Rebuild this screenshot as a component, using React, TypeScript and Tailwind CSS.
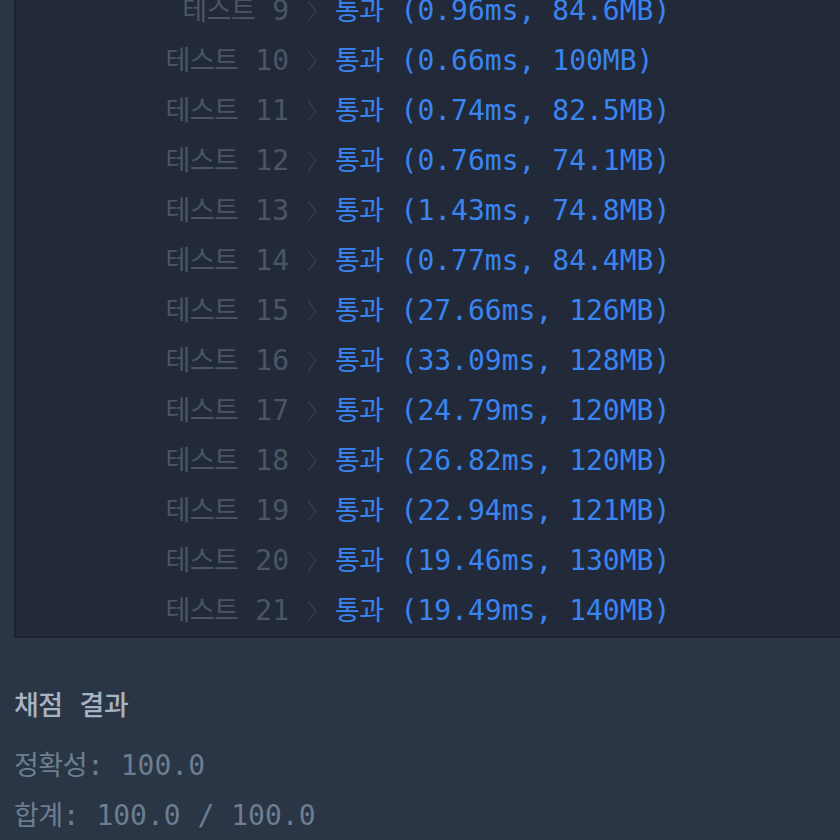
const rows: [number, string, string][] = [
  [9, "0.96ms", "84.6MB"],
  [10, "0.66ms", "100MB"],
  [11, "0.74ms", "82.5MB"],
  [12, "0.76ms", "74.1MB"],
  [13, "1.43ms", "74.8MB"],
  [14, "0.77ms", "84.4MB"],
  [15, "27.66ms", "126MB"],
  [16, "33.09ms", "128MB"],
  [17, "24.79ms", "120MB"],
  [18, "26.82ms", "120MB"],
  [19, "22.94ms", "121MB"],
  [20, "19.46ms", "130MB"],
  [21, "19.49ms", "140MB"],
];

const mono = {
  fontFamily: '"DejaVu Sans Mono", "Noto Sans CJK KR", monospace',
};

// hangul runs a bit narrower than the CJK font's full em
function Ko({ children }: { children: string }) {
  return <span className="text-[27px] tracking-[-0.5px]">{children}</span>;
}

function Chevron() {
  return (
    <svg width="12" height="24" viewBox="0 0 12 24" fill="none">
      <path d="M2 2 L10 12 L2 22" stroke="#323c4d" strokeWidth="1.5" />
    </svg>
  );
}

export default function App() {
  return (
    <div
      className="h-[840px] w-[840px] overflow-hidden bg-[#2a3546] text-[28px] leading-[50px]"
      style={mono}
    >
      <div className="-mt-[14px] ml-[14px] border-b-2 border-l-2 border-[#1c2331] bg-[#222a3a]">
        {rows.map(([n, ms, mb]) => (
          <div key={n} className="flex h-[50px] items-center whitespace-pre">
            <div className="w-[273px] text-right text-[#4a5566]">
              <Ko>테스트</Ko> {n}
            </div>
            <div className="flex w-[46px] justify-center">
              <Chevron />
            </div>
            <div className="text-[#3a84f0]">
              <Ko>통과</Ko> ({ms}, {mb})
            </div>
          </div>
        ))}
      </div>

      <div className="ml-[14px] mt-[43px] whitespace-pre">
        <div className="font-medium text-[#a8b3c1]">
          <Ko>채점</Ko> <Ko>결과</Ko>
        </div>
        <div className="mt-[10px] text-[#6c7e90]">
          <Ko>정확성</Ko>: 100.0
        </div>
        <div className="text-[#6c7e90]">
          <Ko>합계</Ko>: 100.0 / 100.0
        </div>
      </div>
    </div>
  );
}
